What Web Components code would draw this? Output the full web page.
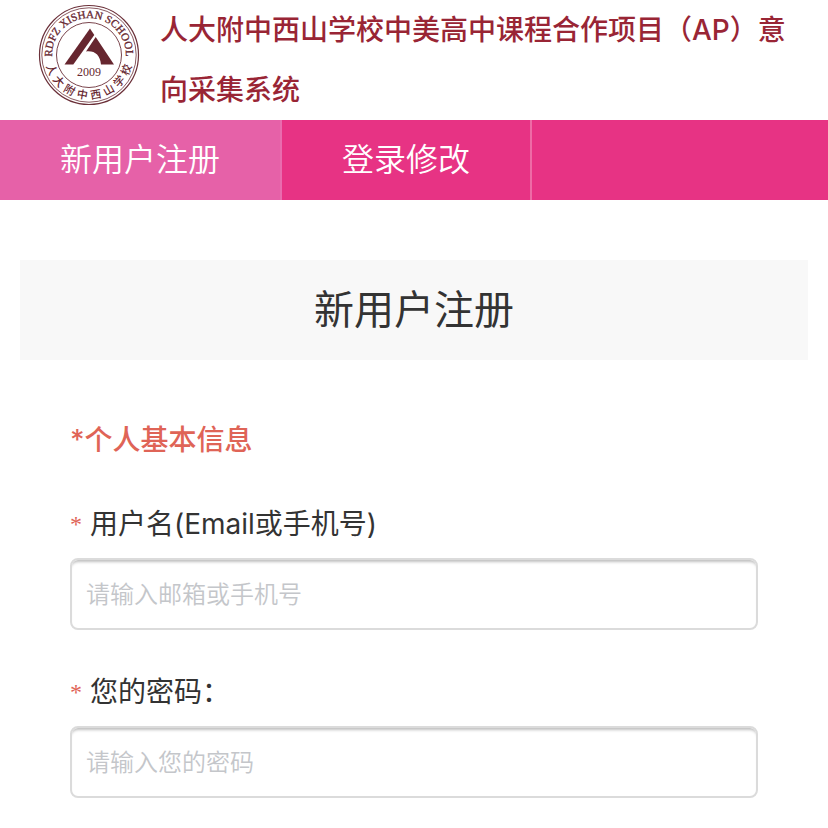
<!DOCTYPE html>
<html lang="zh-CN">
<head>
<meta charset="UTF-8">
<meta name="viewport" content="width=device-width, initial-scale=1">
<title>新用户注册</title>
<style>
    body {
        margin: 0;
        background-color: #ffffff;
        color: #333333;
        font-family: Inter, "Noto Sans CJK SC", sans-serif;
    }
</style>
</head>
<body>
<site-header>人大附中西山学校中美高中课程合作项目（AP）意向采集系统</site-header>

<nav-bar>
    <nav-tab href="#register" active>新用户注册</nav-tab>
    <nav-tab href="#login">登录修改</nav-tab>
</nav-bar>

<register-form heading="新用户注册">
    <form-section heading="*个人基本信息">
        <form-field label="用户名(Email或手机号)" name="username" type="text" placeholder="请输入邮箱或手机号"></form-field>
        <form-field label="您的密码：" name="password" type="password" placeholder="请输入您的密码"></form-field>
    </form-section>
</register-form>

<script>
/**
 * <school-logo>: round school badge
 */
class SchoolLogo extends HTMLElement {
    constructor() {
        super();
        this.attachShadow({ mode: 'open' });
        this.shadowRoot.innerHTML = `
            <style>
                :host {
                    display: block;
                    width: 102px;
                    height: 102px;
                }

                svg {
                    display: block;
                    width: 100%;
                    height: 100%;
                }

                .ring {
                    fill: none;
                    stroke: #6b3039;
                }

                text, .mark {
                    fill: #66262f;
                }

                text {
                    font-family: "Liberation Serif", serif;
                    font-size: 11px;
                    text-anchor: middle;
                }

                .en {
                    stroke: #66262f;
                    stroke-width: 0.3;
                }

                .cn {
                    font-family: "Noto Sans CJK SC", sans-serif;
                    font-weight: 500;
                }

                .year {
                    font-size: 12px;
                }
            </style>
            <svg viewBox="-51 -51 102 102" role="img" aria-label="RDFZ Xishan School">
                <defs>
                    <path id="top" d="M-35.2 11 A36.9 36.9 0 1 1 35.2 11"/>
                    <path id="bottom" d="M-44 0 A44 44 0 0 0 44 0"/>
                </defs>
                <circle class="ring" r="49.5" stroke-width="1.2"/>
                <circle class="ring" r="47.2" stroke-width="0.8"/>
                <circle class="ring" r="32.5" stroke-width="0.9"/>
                <text class="en"><textPath href="#top" startOffset="50%">RDFZ XISHAN SCHOOL</textPath></text>
                <text class="cn"><textPath href="#bottom" startOffset="50%"><tspan dx="0 4 4 4 4 4 4 4">人大附中西山学校</tspan></textPath></text>
                <path class="mark" d="M-24.5 9.5 L1 -26.5 L5.3 -20 L-15.7 9.5 Z"/>
                <path class="mark" d="M6.7 -18 L25 9.5 L12 9.5 C11 0 6 -4.5 -3 -3.5 Z"/>
                <text class="year" y="21">2009</text>
            </svg>
        `;
    }
}

/**
 * <site-header>: badge and system name
 */
class SiteHeader extends HTMLElement {
    constructor() {
        super();
        this.attachShadow({ mode: 'open' });
        this.shadowRoot.innerHTML = `
            <style>
                :host {
                    display: flex;
                    align-items: flex-start;
                    gap: 20px;
                    padding: 0 20px 0 38px;
                }

                school-logo {
                    flex: none;
                    margin-top: 4px;
                }

                h1 {
                    margin: 0;
                    color: #992535;
                    font-size: 28px;
                    font-weight: 500;
                    line-height: 60px;
                }
            </style>
            <school-logo></school-logo>
            <h1><slot></slot></h1>
        `;
    }
}

/**
 * <nav-bar>: row of tabs
 */
class NavBar extends HTMLElement {
    constructor() {
        super();
        this.attachShadow({ mode: 'open' });
        this.shadowRoot.innerHTML = `
            <style>
                :host {
                    display: block;
                }

                nav {
                    display: flex;
                    background-color: #e73384;
                }
            </style>
            <nav><slot></slot></nav>
        `;
    }
}

/**
 * <nav-tab>: one link of the bar
 */
class NavTab extends HTMLElement {
    constructor() {
        super();
        this.attachShadow({ mode: 'open' });
    }

    connectedCallback() {
        this.shadowRoot.innerHTML = `
            <style>
                :host {
                    display: block;
                }

                a {
                    display: block;
                    padding: 0 60px;
                    border-right: 2px solid #ee6ba6;
                    color: #ffffff;
                    font-size: 32px;
                    font-weight: 350;
                    line-height: 80px;
                    text-decoration: none;
                }

                :host([active]) a {
                    background-color: #e661a8;
                    border-color: #e96cae;
                }
            </style>
            <a href="${this.getAttribute('href')}"><slot></slot></a>
        `;
    }
}

/**
 * <register-form>: page heading and the form
 */
class RegisterForm extends HTMLElement {
    constructor() {
        super();
        this.attachShadow({ mode: 'open' });
    }

    connectedCallback() {
        this.shadowRoot.innerHTML = `
            <style>
                :host {
                    display: block;
                    padding: 60px 20px 0;
                }

                h2 {
                    margin: 0;
                    background-color: #f8f8f8;
                    font-size: 40px;
                    font-weight: 400;
                    line-height: 100px;
                    text-align: center;
                }

                form {
                    padding: 50px 50px 0;
                }
            </style>
            <h2>${this.getAttribute('heading')}</h2>
            <form><slot></slot></form>
        `;
    }
}

/**
 * <form-section>: titled group of fields
 */
class FormSection extends HTMLElement {
    constructor() {
        super();
        this.attachShadow({ mode: 'open' });
    }

    connectedCallback() {
        this.shadowRoot.innerHTML = `
            <style>
                :host {
                    display: block;
                }

                h3 {
                    margin: 0 0 24px;
                    color: #df6457;
                    font-size: 28px;
                    font-weight: 500;
                    line-height: 60px;
                }

                .fields {
                    display: flex;
                    flex-direction: column;
                    gap: 32px;
                }
            </style>
            <h3>${this.getAttribute('heading')}</h3>
            <div class="fields"><slot></slot></div>
        `;
    }
}

/**
 * <form-field>: required label with its text box
 */
class FormField extends HTMLElement {
    constructor() {
        super();
        this.attachShadow({ mode: 'open' });
    }

    connectedCallback() {
        const name = this.getAttribute('name');
        this.shadowRoot.innerHTML = `
            <style>
                :host {
                    display: flex;
                    flex-direction: column;
                    gap: 4px;
                }

                label {
                    display: flex;
                    gap: 8px;
                    font-size: 28px;
                    line-height: 60px;
                }

                .star {
                    color: #df6457;
                    font-family: "Liberation Serif", serif;
                    font-size: 24px;
                }

                input {
                    box-sizing: border-box;
                    width: 100%;
                    height: 72px;
                    margin: 0;
                    padding: 0 14px;
                    border: 2px solid #dbdbdb;
                    border-radius: 8px;
                    background-color: #ffffff;
                    box-shadow: inset 0 4px 3px -2px rgba(0, 0, 0, 0.25);
                    color: inherit;
                    font-family: inherit;
                    font-size: 24px;
                    font-weight: 350;
                }

                input::placeholder {
                    color: #c4c6ca;
                }
            </style>
            <label for="${name}"><span class="star">*</span>${this.getAttribute('label')}</label>
            <input id="${name}" name="${name}" type="${this.getAttribute('type')}" placeholder="${this.getAttribute('placeholder')}">
        `;
    }
}

// Inner elements first, then the ones that use them
customElements.define('school-logo', SchoolLogo);
customElements.define('site-header', SiteHeader);
customElements.define('nav-bar', NavBar);
customElements.define('nav-tab', NavTab);
customElements.define('form-field', FormField);
customElements.define('form-section', FormSection);
customElements.define('register-form', RegisterForm);
</script>
</body>
</html>
